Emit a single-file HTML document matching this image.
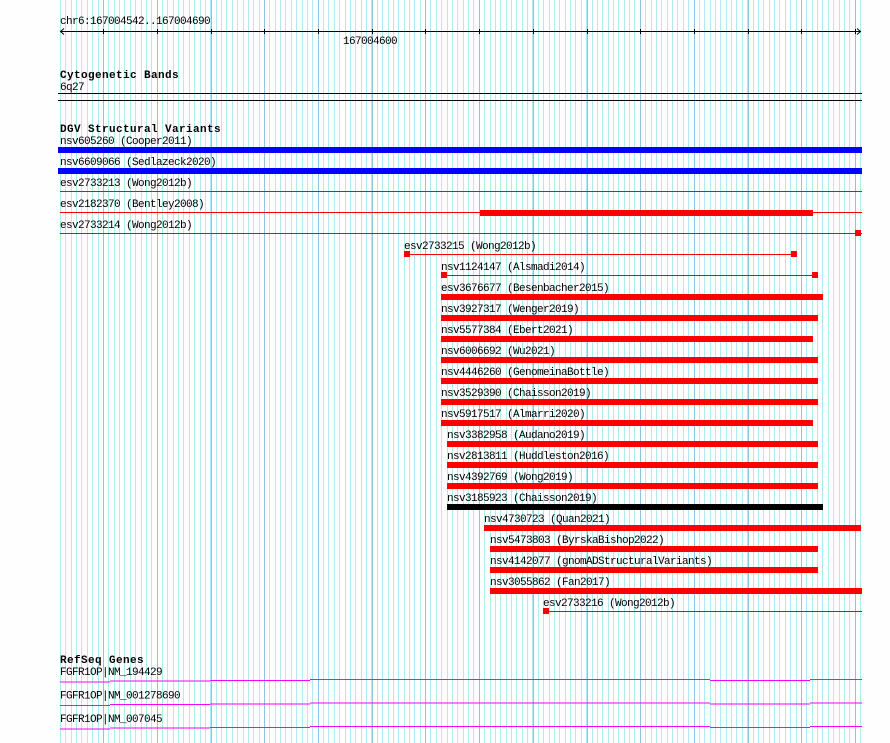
<!DOCTYPE html>
<html><head><meta charset="utf-8"><style>
html,body{margin:0;padding:0;background:#fdfefd;width:890px;height:743px;overflow:hidden}
svg{display:block}
text{font-family:"Liberation Mono",monospace;font-size:11px;letter-spacing:-0.6px;fill:#000}
.b{font-weight:bold;font-size:11px;letter-spacing:0.4px}
</style></head><body>
<svg id="s" width="890" height="743" xmlns="http://www.w3.org/2000/svg">
<g id="grid"></g>
<g id="fg"></g>
</svg>
<script>
var NS="http://www.w3.org/2000/svg";
var grid=document.getElementById('grid'),fg=document.getElementById('fg');
function el(p,tag,a,t){var e=document.createElementNS(NS,tag);for(var k in a)e.setAttribute(k,a[k]);if(t)e.textContent=t;p.appendChild(e);return e;}
for(var k=0;k<=149;k++){var x=Math.round(60+k*5.369);el(grid,'rect',{x:x,y:0,width:1,height:743,fill:'#aeecf0'});}
var dark=[];for(var j=0;j<15;j++){var x=Math.round(103.3+j*53.69);dark.push(x+0.5);el(grid,'rect',{x:x,y:0,width:1,height:743,fill:'#8cc4e4'});}
// axis
el(fg,'text',{x:60,y:24},'chr6:167004542..167004690');
el(fg,'line',{x1:60,x2:861,y1:31.5,y2:31.5,stroke:'#000'});
el(fg,'path',{d:'M64 28.5 L60.5 31.5 L64 34.5',fill:'none',stroke:'#000'});
el(fg,'path',{d:'M857 28.5 L860.5 31.5 L857 34.5',fill:'none',stroke:'#000'});
dark.forEach(function(x){if(x<858)el(fg,'line',{x1:x,x2:x,y1:29,y2:34,stroke:'#000'});});
el(fg,'text',{x:343,y:44},'167004600');
// cytoband
el(fg,'text',{x:60,y:78,'class':'b'},'Cytogenetic Bands');
el(fg,'text',{x:60,y:90},'6q27');
el(fg,'rect',{x:58,y:93,width:804,height:1,fill:'#000'});
el(fg,'rect',{x:58,y:100,width:804,height:1,fill:'#000'});
el(fg,'text',{x:60,y:132,'class':'b'},'DGV Structural Variants');
var rows=[
['nsv605260 (Cooper2011)',60,'bar',58,862,'#0000ff'],
['nsv6609066 (Sedlazeck2020)',60,'bar',58,862,'#0000ff'],
['esv2733213 (Wong2012b)',60,'thin',60,862],
['esv2182370 (Bentley2008)',60,'thinbar',60,862,480,813],
['esv2733214 (Wong2012b)',60,'thinsq',60,862,[855]],
['esv2733215 (Wong2012b)',404,'thinsq',404,797,[404,791]],
['nsv1124147 (Alsmadi2014)',441,'thinsq',441,818,[441,812]],
['esv3676677 (Besenbacher2015)',441,'bar',441,823,'#ff0000'],
['nsv3927317 (Wenger2019)',441,'bar',441,818,'#ff0000'],
['nsv5577384 (Ebert2021)',441,'bar',441,813,'#ff0000'],
['nsv6006692 (Wu2021)',441,'bar',441,818,'#ff0000'],
['nsv4446260 (GenomeinaBottle)',441,'bar',441,818,'#ff0000'],
['nsv3529390 (Chaisson2019)',441,'bar',441,818,'#ff0000'],
['nsv5917517 (Almarri2020)',441,'bar',441,813,'#ff0000'],
['nsv3382958 (Audano2019)',447,'bar',447,818,'#ff0000'],
['nsv2813811 (Huddleston2016)',447,'bar',447,818,'#ff0000'],
['nsv4392769 (Wong2019)',447,'bar',447,818,'#ff0000'],
['nsv3185923 (Chaisson2019)',447,'bar',447,823,'#000000'],
['nsv4730723 (Quan2021)',484,'bar',484,861,'#ff0000'],
['nsv5473803 (ByrskaBishop2022)',490,'bar',490,818,'#ff0000'],
['nsv4142077 (gnomADStructuralVariants)',490,'bar',490,818,'#ff0000'],
['nsv3055862 (Fan2017)',490,'bar',490,862,'#ff0000'],
['esv2733216 (Wong2012b)',543,'thinsq',543,862,[543]]
];
rows.forEach(function(r,i){
 var ty=140+21*i;
 el(fg,'text',{x:r[1],y:ty+4},r[0]);
 var t=r[2];
 if(t=='bar'){el(fg,'rect',{x:r[3],y:ty+7,width:r[4]-r[3],height:6,fill:r[5]});}
 else{
  el(fg,'rect',{x:r[3],y:ty+9,width:r[4]-r[3],height:1,fill:'#ff0000'});
  if(t=='thinbar')el(fg,'rect',{x:r[5],y:ty+7,width:r[6]-r[5],height:6,fill:'#ff0000'});
  if(t=='thinsq')r[5].forEach(function(x){el(fg,'rect',{x:x,y:ty+6,width:6,height:6,fill:'#ff0000'});});
 }
});
// RefSeq
el(fg,'text',{x:60,y:663,'class':'b'},'RefSeq Genes');
var genes=['FGFR1OP|NM_194429','FGFR1OP|NM_001278690','FGFR1OP|NM_007045'];
genes.forEach(function(g,i){
 var ty=671+23.5*i;
 el(fg,'text',{x:60,y:ty+4},g);
 var b=ty+10;
 var segs=[[60,110,b+0.5],[110,210,b-0.5],[210,310,b-1],[310,710,b-2],[710,810,b-1],[810,862,b-2]];
 segs.forEach(function(s){el(fg,'rect',{x:s[0],y:s[2],width:s[1]-s[0],height:1,fill:'#ff00ff'});});
});
</script>
</body></html>
